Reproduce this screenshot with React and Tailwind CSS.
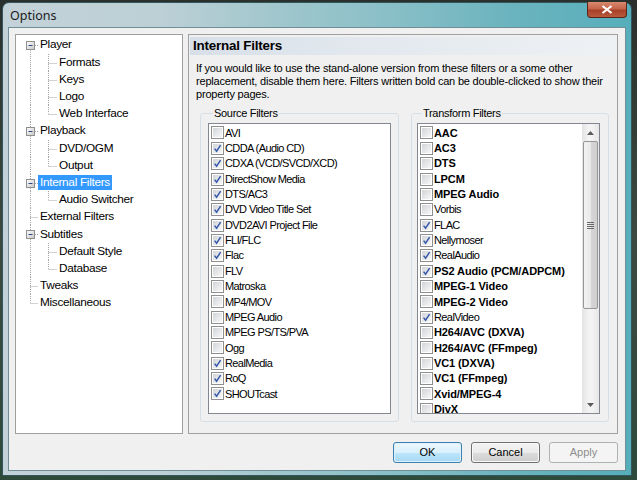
import React from "react";

const sourceFilters = [
  ["AVI", 0], ["CDDA (Audio CD)", 1], ["CDXA (VCD/SVCD/XCD)", 1], ["DirectShow Media", 1],
  ["DTS/AC3", 1], ["DVD Video Title Set", 1], ["DVD2AVI Project File", 1], ["FLI/FLC", 1],
  ["Flac", 1], ["FLV", 0], ["Matroska", 0], ["MP4/MOV", 0], ["MPEG Audio", 0],
  ["MPEG PS/TS/PVA", 0], ["Ogg", 0], ["RealMedia", 1], ["RoQ", 1], ["SHOUTcast", 1],
];

const transformFilters = [
  ["AAC", 0, 1], ["AC3", 0, 1], ["DTS", 0, 1], ["LPCM", 0, 1], ["MPEG Audio", 0, 1],
  ["Vorbis", 0, 0], ["FLAC", 1, 0], ["Nellymoser", 1, 0], ["RealAudio", 1, 0],
  ["PS2 Audio (PCM/ADPCM)", 1, 1], ["MPEG-1 Video", 0, 1], ["MPEG-2 Video", 0, 1],
  ["RealVideo", 1, 0], ["H264/AVC (DXVA)", 0, 1], ["H264/AVC (FFmpeg)", 0, 1],
  ["VC1 (DXVA)", 0, 1], ["VC1 (FFmpeg)", 0, 1], ["Xvid/MPEG-4", 0, 1], ["DivX", 0, 1],
];

const tree = [
  { t: "Player", lvl: 0, box: true, first: true },
  { t: "Formats", lvl: 1 },
  { t: "Keys", lvl: 1 },
  { t: "Logo", lvl: 1 },
  { t: "Web Interface", lvl: 1, lastChild: true },
  { t: "Playback", lvl: 0, box: true },
  { t: "DVD/OGM", lvl: 1 },
  { t: "Output", lvl: 1, lastChild: true },
  { t: "Internal Filters", lvl: 0, box: true, sel: true },
  { t: "Audio Switcher", lvl: 1, lastChild: true },
  { t: "External Filters", lvl: 0 },
  { t: "Subtitles", lvl: 0, box: true },
  { t: "Default Style", lvl: 1 },
  { t: "Database", lvl: 1, lastChild: true },
  { t: "Tweaks", lvl: 0 },
  { t: "Miscellaneous", lvl: 0, last: true },
];

const H = 17.2;
const LINE = "#a5a5a5";

function RootCell({ row }) {
  const c = H / 2;
  const x = 14.5;
  return (
    <svg width="22" height={H} className="shrink-0 block">
      <line x1={x} x2={x} y1={row.first ? c + 5 : 0} y2={row.last ? c : H} stroke={LINE} strokeDasharray="1 1" />
      <line x1={row.box ? 19 : x} x2="22" y1={Math.round(c) + 0.5} y2={Math.round(c) + 0.5} stroke={LINE} strokeDasharray="1 1" />
      {row.box && (
        <g>
          <defs>
            <linearGradient id="bx" x1="0" y1="0" x2="1" y2="1">
              <stop offset="0" stopColor="#ffffff" />
              <stop offset="1" stopColor="#c6c6c6" />
            </linearGradient>
          </defs>
          <rect x="10.5" y={Math.round(c) - 4 + 0.5} width="8" height="8" fill="url(#bx)" stroke="#8e8f8f" />
          <line x1="12.5" x2="16.5" y1={Math.round(c) + 0.5} y2={Math.round(c) + 0.5} stroke="#2c4a8a" />
        </g>
      )}
    </svg>
  );
}

function ChildCells({ row }) {
  const c = H / 2;
  return (
    <>
      <svg width="22" height={H} className="shrink-0 block">
        <line x1="14.5" x2="14.5" y1="0" y2={H} stroke={LINE} strokeDasharray="1 1" />
      </svg>
      <svg width="19" height={H} className="shrink-0 block">
        <line x1="10.5" x2="10.5" y1="0" y2={row.lastChild ? c : H} stroke={LINE} strokeDasharray="1 1" />
        <line x1="10.5" x2="19" y1={Math.round(c) + 0.5} y2={Math.round(c) + 0.5} stroke={LINE} strokeDasharray="1 1" />
      </svg>
    </>
  );
}

function Check({ on }) {
  return (
    <span className="w-[13px] h-[13px] shrink-0 border border-[#8f8f8f] bg-white p-[1px] flex">
      <span className="flex-1 bg-gradient-to-br from-[#d2d4d8] to-[#f8f8f8] flex items-center justify-center">
        {on ? (
          <svg width="9" height="9" viewBox="0 0 9 9">
            <path d="M1.6 4.6 L3.6 7.2 L7.6 1.2" stroke="#3458a8" strokeWidth="1.5" fill="none" />
          </svg>
        ) : null}
      </span>
    </span>
  );
}

function ListRow({ label, on, bold }) {
  return (
    <div className="h-[15.35px] flex items-center gap-[1px] pl-[2px] whitespace-nowrap">
      <Check on={on} />
      <span className={bold ? "font-bold tracking-[-0.1px]" : "tracking-[-0.6px]"}>{label}</span>
    </div>
  );
}

function Button({ children, variant }) {
  if (variant === "default") {
    return (
      <div className="w-[69px] h-[21px] rounded-[3px] border border-[#3c7fb1] p-[1px] bg-[#dff2fc]">
        <div className="h-full rounded-[2px] bg-[linear-gradient(#eaf6fd_0%,#d9f0fc_50%,#bee6fd_50%,#a7d9f5_100%)] flex items-center justify-center text-[11px] text-black">
          {children}
        </div>
      </div>
    );
  }
  if (variant === "disabled") {
    return (
      <div className="w-[69px] h-[21px] rounded-[3px] border border-[#adb2b5] bg-[#f4f4f4] flex items-center justify-center text-[11px] text-[#8d8d8d]">
        {children}
      </div>
    );
  }
  return (
    <div className="w-[69px] h-[21px] rounded-[3px] border border-[#707070] p-[1px] bg-[#f8f8f8]">
      <div className="h-full rounded-[2px] bg-[linear-gradient(#f2f2f2_0%,#ebebeb_50%,#dddddd_50%,#cfcfcf_100%)] flex items-center justify-center text-[11px] text-black">
        {children}
      </div>
    </div>
  );
}

function Scrollbar() {
  return (
    <div className="w-[17px] shrink-0 flex flex-col bg-[linear-gradient(90deg,#e3e3e3,#f3f3f3_40%,#f3f3f3_60%,#e6e6e6)]">
      <div className="h-[17px] flex items-center justify-center">
        <svg width="7" height="4" viewBox="0 0 7 4"><path d="M0 4 L3.5 0 L7 4 Z" fill="#5a5a5a" /></svg>
      </div>
      <div className="mx-[1px] h-[168px] rounded-[2px] border border-[#969696] bg-[linear-gradient(90deg,#f3f3f3,#e8e8e8_50%,#d6d6d6_50%,#cfcfcf)] flex flex-col items-center justify-center gap-[1px]">
        <div className="w-[7px] h-[1px] bg-[#6a6a6a]" />
        <div className="w-[7px] h-[1px] bg-[#6a6a6a]" />
        <div className="w-[7px] h-[1px] bg-[#6a6a6a]" />
        <div className="w-[7px] h-[1px] bg-[#6a6a6a]" />
      </div>
      <div className="flex-1" />
      <div className="h-[17px] flex items-center justify-center">
        <svg width="7" height="4" viewBox="0 0 7 4"><path d="M0 0 L3.5 4 L7 0 Z" fill="#5a5a5a" /></svg>
      </div>
    </div>
  );
}

export default function App() {
  return (
    <div className="w-[637px] h-[480px] overflow-hidden bg-[linear-gradient(180deg,#2a302c_0%,#3c4a40_50%,#2d4a3a_100%)] pt-[2px] pl-[2px] pr-[5px] pb-[4px] font-['Liberation_Sans',Arial,sans-serif]">
      <div className="h-full flex flex-col rounded-t-[7px] border border-[#33555c] bg-[linear-gradient(90deg,#c3d2d8_0%,#bcd0d6_25%,#9ec6cc_45%,#8cc0c8_60%,#6cb4be_80%,#56aebb_100%)]">
        {/* Title bar */}
        <div className="h-[24px] flex items-start justify-between">
          <div className="pl-[7px] pt-[5px] text-[12.5px] text-[#1c1c1c] font-['Noto_Sans',sans-serif] leading-[15px]">Options</div>
          <div className="mr-[4px] -mt-[1px] w-[40px] h-[16px] rounded-b-[4px] border border-[#5a2418] border-t-0 bg-[linear-gradient(#d88a70_0%,#c5644a_45%,#a8402a_55%,#b85a3c_100%)] flex items-center justify-center">
            <svg width="12" height="9" viewBox="0 0 12 9">
              <path d="M1.5 1 L10.5 8 M10.5 1 L1.5 8" stroke="#ffffff" strokeWidth="2.2" />
            </svg>
          </div>
        </div>
        {/* Client frame */}
        <div className="flex-1 flex px-[5px] pb-[4px] pt-0">
          <div className="flex-1 border border-[#6f8e96] bg-[#f0f0f0] flex flex-col pt-[6px] pl-[6px] pr-[7px] pb-[7px]">
            <div className="flex gap-[5px] h-[400px]">
              {/* Tree */}
              <div className="w-[168px] h-full border border-[#a0a0a0] bg-white pt-[1.4px] text-[11.8px] text-black">
                {tree.map((r) => (
                  <div key={r.t} className="flex items-center whitespace-nowrap" style={{ height: H }}>
                    {r.lvl === 0 ? <RootCell row={r} /> : <ChildCells row={r} />}
                    <span className={"px-[2px] leading-[15px] tracking-[-0.3px] " + (r.sel ? "bg-[#3399ff] text-white" : "")}>{r.t}</span>
                  </div>
                ))}
              </div>
              {/* Page panel */}
              <div className="w-[430px] h-full border border-[#a0a0a0] flex flex-col px-[1px] pt-[2px] text-[11px] text-black">
                <div className="h-[18px] bg-[linear-gradient(90deg,#d7dfe8_0%,#e2e8ee_40%,#eef1f4_100%)] flex items-center pl-[3px] font-bold text-[13.4px] tracking-[-0.2px]">
                  Internal Filters
                </div>
                <p className="mt-[7px] ml-[6px] leading-[13px] whitespace-nowrap tracking-[-0.2px]">
                  If you would like to use the stand-alone version from these filters or a some other<br />
                  replacement, disable them here. Filters written bold can be double-clicked to show their<br />
                  property pages.
                </p>
                <div className="mt-[6px] flex pl-[10px] gap-[12px]">
                  <fieldset className="w-[199px] h-[315px] border border-[#d5dfe5] rounded-[3px] pl-[7px] pr-[7px] pt-[3px]">
                    <legend className="ml-[5px] px-[1px] leading-[13px] tracking-[-0.3px]">Source Filters</legend>
                    <div className="h-[291px] border border-[#828790] bg-white pt-[1.3px]">
                      {sourceFilters.map(([l, on]) => (
                        <ListRow key={l} label={l} on={on} />
                      ))}
                    </div>
                  </fieldset>
                  <fieldset className="w-[198px] h-[315px] border border-[#d5dfe5] rounded-[3px] pl-[5px] pr-[8px] pt-[3px]">
                    <legend className="ml-[5px] px-[1px] leading-[13px] tracking-[-0.3px]">Transform Filters</legend>
                    <div className="h-[291px] border border-[#828790] bg-white flex overflow-hidden">
                      <div className="flex-1 pt-[1.3px] overflow-hidden">
                        {transformFilters.map(([l, on, b]) => (
                          <ListRow key={l} label={l} on={on} bold={b} />
                        ))}
                      </div>
                      <Scrollbar />
                    </div>
                  </fieldset>
                </div>
              </div>
            </div>
            <div className="mt-[8px] flex justify-end gap-[9px]">
              <Button variant="default">OK</Button>
              <Button>Cancel</Button>
              <Button variant="disabled">Apply</Button>
            </div>
          </div>
        </div>
      </div>
    </div>
  );
}
